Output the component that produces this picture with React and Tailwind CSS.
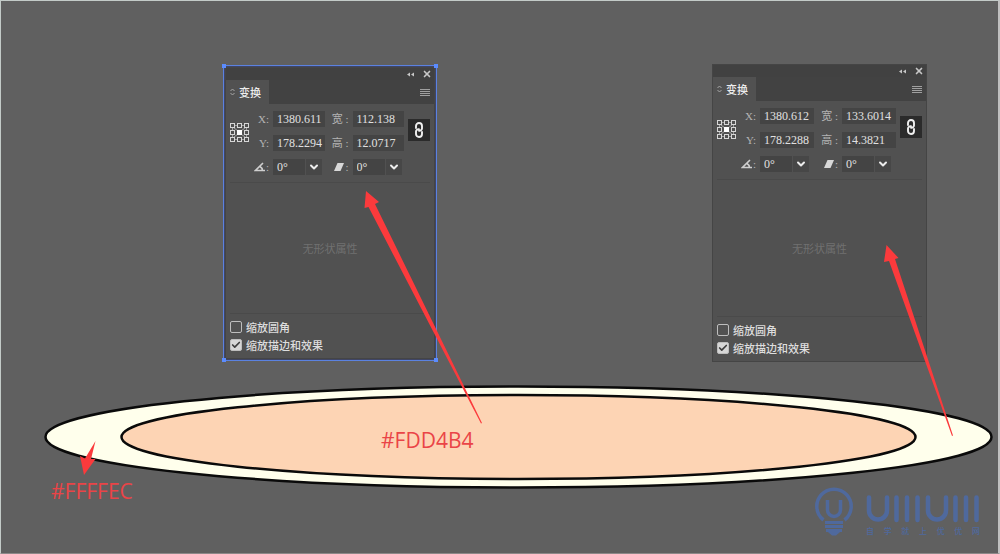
import React from 'react';
import { Check, ChevronDown, X } from 'lucide-react';

const PANELS = [
  { id: 'inner', x: '1380.611', y: '178.2294', width: '112.138', height: '12.0717' },
  { id: 'outer', x: '1380.612', y: '178.2288', width: '133.6014', height: '14.3821' },
];

const ReferencePoint = () => (
  <svg width="19" height="19" viewBox="0 0 19 19" fill="none" stroke="#d6d6d6" aria-hidden="true">
    <path d="M4 5l4 3M15 5l-4 3M4 14l4-3M15 14l-4-3M4.500 2.500h10M4.500 16.500h10M2.500 4.500v10M16.500 4.500v10" opacity="0.6" />
    {[2.5, 9.5, 16.5].map((cy) =>
      [2.5, 9.5, 16.5].map((cx) => (
        <rect key={`${cx}-${cy}`} x={cx - 2} y={cy - 2} width="4" height="4" fill="#505050" />
      ))
    )}
    <rect x="7.5" y="7.5" width="4" height="4" fill="#fff" stroke="#fff" />
  </svg>
);

const AngleIcon = () => (
  <svg width="12" height="10" viewBox="0 0 12 10" fill="none" stroke="#cfcfcf" strokeWidth="1.6">
    <path d="M9 1L1.5 8.5H11M6 4.5Q8.500 6 8.500 8.500" />
  </svg>
);

const ShearIcon = () => (
  <svg width="12" height="10" viewBox="0 0 12 10" fill="#d8d8d8">
    <path d="M4.500 1h6.500L7.500 9H1z" />
  </svg>
);

const LinkIcon = () => (
  <svg width="10" height="16" viewBox="0 0 10 16" fill="none" stroke="#f0f0f0" strokeWidth="1.9" strokeLinecap="round">
    <path d="M2 6V4a3 3 0 0 1 6 0v2.500a2.500 2.500 0 0 1-3 2.200" />
    <path d="M8 10v2a3 3 0 0 1-6 0V9.500a2.500 2.500 0 0 1 3-2.200" />
  </svg>
);

const NumberField = ({ id, label, value }) => (
  <>
    <label htmlFor={id} className="text-right whitespace-nowrap text-[#b4b4b4]">{label}</label>
    <input
      id={id}
      defaultValue={value}
      className="h-4 w-full min-w-0 bg-[#444444] pl-1 text-xs leading-4 text-[#e0e0e0] outline-none"
    />
  </>
);

const AngleField = ({ id, name, icon }) => (
  <>
    <label htmlFor={id} aria-label={name} className="flex items-center justify-end text-[#b4b4b4]">
      {icon}:
    </label>
    <div className="flex gap-px">
      <input
        id={id}
        defaultValue="0°"
        className="h-4 w-8 min-w-0 bg-[#444444] pl-1 text-xs leading-4 text-[#e0e0e0] outline-none"
      />
      <button type="button" aria-label={`${name} presets`} className="flex h-4 w-4 items-center justify-center bg-[#474747] text-[#ececec]">
        <ChevronDown size={12} strokeWidth={4} />
      </button>
    </div>
  </>
);

const Option = ({ label, checked }) => (
  <label className="flex items-center gap-1 text-[11px] leading-[18px] font-medium text-[#dedede]">
    <span className="grid">
      <input
        type="checkbox"
        defaultChecked={checked}
        className="peer col-start-1 row-start-1 size-3 appearance-none rounded-xs border border-[#bdbdbd] checked:bg-[#d6d6d6]"
      />
      <Check
        size={10}
        strokeWidth={4}
        className="pointer-events-none invisible col-start-1 row-start-1 m-px text-[#3c3c3c] peer-checked:visible"
      />
    </span>
    {label}
  </label>
);

const TransformPanel = ({ id, x, y, width, height }) => (
  <section className="flex h-full flex-col border border-[#454545] bg-[#515151] font-['Noto_Sans_CJK_SC',sans-serif] text-[11px]">
    <header className="flex h-3 items-center justify-end gap-2 bg-[#414141] px-0.5 text-[#c8c8c8]">
      <button type="button" aria-label="Collapse">
        <svg width="7" height="5" viewBox="0 0 7 5" fill="#c8c8c8">
          <path d="M0 2.500L3 .5v4zM4 2.500L7 .5v4z" />
        </svg>
      </button>
      <button type="button" aria-label="Close"><X size={10} strokeWidth={4} /></button>
    </header>
    <div className="flex h-6 items-center justify-between bg-[#424242] pr-1">
      <h2 className="flex h-full items-center gap-1 bg-[#515151] px-1 pr-2 font-medium text-[#ededed]">
        <svg width="5" height="8" viewBox="0 0 5 8" fill="none" stroke="#a8a8a8">
          <path d="M.5 3l2-2 2 2M.5 5l2 2 2-2" />
        </svg>
        变换
      </h2>
      <button type="button" aria-label="Panel menu">
        <svg width="10" height="8" viewBox="0 0 10 8" stroke="#a0a0a0">
          <path d="M0 1.500h10M0 3.500h10M0 5.500h10M0 7.500h10" />
        </svg>
      </button>
    </div>

    <div className="flex gap-1 px-1 pt-[7px] pb-[7px]">
      <div className="pt-3"><ReferencePoint /></div>
      <div className="grid flex-1 grid-cols-[16px_1fr_20px_1fr] items-center gap-x-1 gap-y-2 font-['Liberation_Serif','Noto_Sans_CJK_SC',serif] leading-4">
        <NumberField id={`${id}-x`} label="X:" value={x} />
        <NumberField id={`${id}-w`} label="宽 :" value={width} />
        <NumberField id={`${id}-y`} label="Y:" value={y} />
        <NumberField id={`${id}-h`} label="高 :" value={height} />
        <AngleField id={`${id}-rotate`} name="Rotate" icon={<AngleIcon />} />
        <AngleField id={`${id}-shear`} name="Shear" icon={<ShearIcon />} />
      </div>
      <button type="button" aria-label="Constrain proportions" className="mt-2 flex size-[22px] items-center justify-center bg-[#2b2b2b]">
        <LinkIcon />
      </button>
    </div>

    <div className="mx-1 flex flex-1 items-center justify-center border-y border-[#4a4a4a] text-[#707070]">
      无形状属性
    </div>
    <div className="flex flex-col px-1 py-1">
      <Option label="缩放圆角" />
      <Option label="缩放描边和效果" checked />
    </div>
  </section>
);

const Selection = ({ children }) => (
  <div className="relative h-full border border-[#5b82e0] bg-[#3f4566] p-px">
    {children}
    <i className="absolute -top-0.5 -left-0.5 size-1 bg-[#5b8cff]" />
    <i className="absolute -top-0.5 -right-0.5 size-1 bg-[#5b8cff]" />
    <i className="absolute -bottom-0.5 -left-0.5 size-1 bg-[#5b8cff]" />
    <i className="absolute -right-0.5 -bottom-0.5 size-1 bg-[#5b8cff]" />
  </div>
);

const Artwork = () => (
  <svg viewBox="1 1 997 552" className="absolute inset-x-0 top-0 w-full" aria-hidden="true">
    <g stroke="#0a0a0a" strokeWidth="2.5">
      <ellipse cx="518.5" cy="437" rx="473" ry="50.500" fill="#ffffec" />
      <ellipse cx="518.5" cy="437" rx="397" ry="42" fill="#fdd4b4" />
    </g>
  </svg>
);

const Arrows = () => (
  <svg viewBox="1 1 997 552" fill="#fb3a3c" className="pointer-events-none absolute inset-x-0 top-0 w-full" aria-hidden="true">
    <path d="M366 191L364.500 208L368.500 207L481 423.500L482 423L375 204L379 202z" />
    <path d="M886.500 245L884 262L889 261L952 436L953 435.500L895 259L898.500 258z" />
    <path d="M84 475L80 456L85 458.500L95.500 441L91 459L95.500 459z" />
  </svg>
);

const Watermark = () => (
  <div className="flex items-start gap-3 text-[#4f699d]">
    <svg width="40" height="50" viewBox="-1 0 40 50" fill="none" stroke="currentColor" strokeWidth="3.500">
      <path d="M8.500 33A17.200 17.200 0 1 1 29.500 33" />
      <path d="M12.500 13v10a6.500 6.500 0 0 0 13 0V13" />
      <path d="M10 35.500h18M10 39.500h18M11 43.500h16" strokeWidth="3" />
      <path d="M13 45h12l-4 3.500h-4z" fill="currentColor" stroke="none" />
    </svg>
    <div className="flex flex-col pt-2">
      <svg width="114" height="28" viewBox="0 0 114 28" fill="none" stroke="currentColor" strokeWidth="4.500" strokeLinecap="round">
        <path d="M3 2.500v13a9 9 0 0 0 18 0v-13M30.500 2.500v22.500M41 2.500v22.500M51.500 2.500v22.500" />
        <path d="M62 2.500v13a9 9 0 0 0 18 0v-13M89.500 2.500v22.500M100 2.500v22.500M110.500 2.500v22.500" />
      </svg>
      <p className="flex justify-between pt-0.5 font-['Noto_Sans_CJK_SC',sans-serif] text-[8px] leading-3 font-medium">
        {[...'自学就上优优网'].map((char, i) => <span key={i}>{char}</span>)}
      </p>
    </div>
  </div>
);

const App = () => {
  return (
    <main className="relative min-h-screen w-full overflow-hidden border-t border-r-2 border-b border-l border-t-[#c3cbc8] border-r-[#c0c0c0] border-b-[#8c8888] border-l-[#c3cbc8] bg-[#606060]">
      <Artwork />
      <div className="absolute top-[64px] left-[222px] h-[296px] w-[214px]">
        <Selection><TransformPanel {...PANELS[0]} /></Selection>
      </div>
      <div className="absolute top-[63px] left-[711px] h-[298px] w-[215px]">
        <TransformPanel {...PANELS[1]} />
      </div>
      <Arrows />
      <p className="absolute top-[425px] left-[380px] font-['Open_Sans',sans-serif] text-[21px] leading-7 text-[#ea4447]">#FDD4B4</p>
      <p className="absolute top-[476px] left-[50px] font-['Open_Sans',sans-serif] text-[21px] leading-7 text-[#ea4447]">#FFFFEC</p>
      <div className="absolute right-[18px] bottom-4">
        <Watermark />
      </div>
    </main>
  );
};

export default App;
